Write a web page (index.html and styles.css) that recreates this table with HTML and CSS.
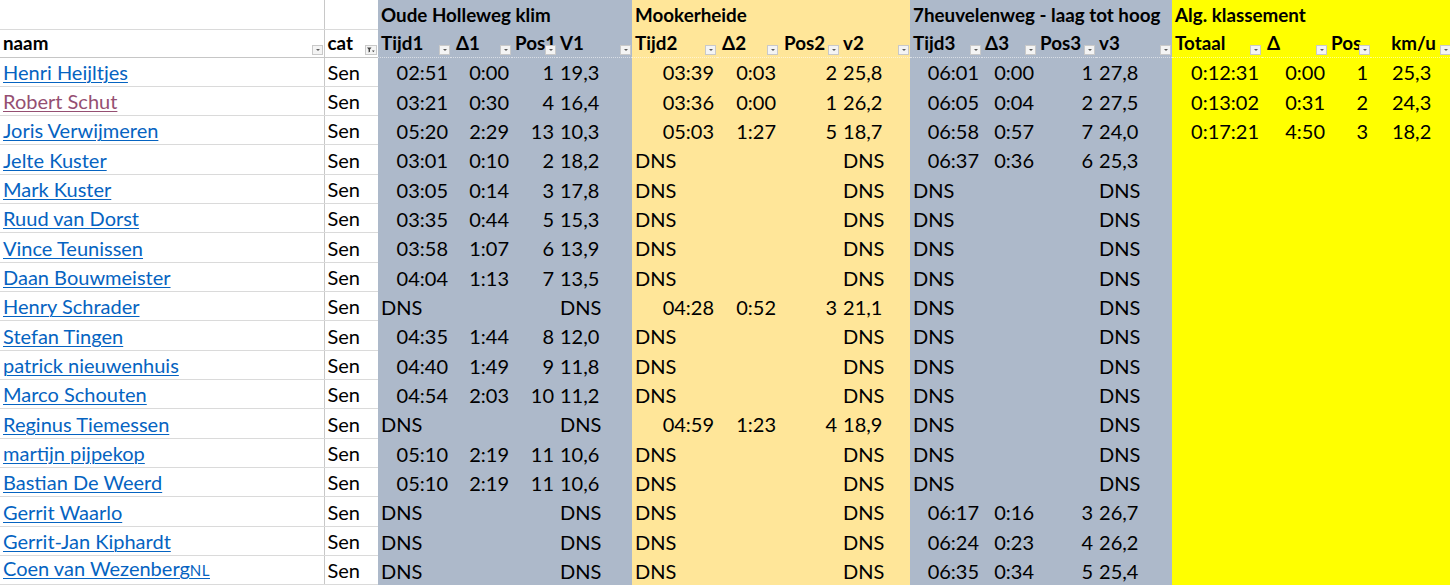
FILE: index.html
```html
<!DOCTYPE html>
<html lang="nl">
<head>
<meta charset="utf-8">
<title>Klassement</title>
<link rel="stylesheet" href="styles.css">
</head>
<body>
<table class="sheet">
  <colgroup>
    <col class="w-naam"><col class="w-cat">
    <col class="g w-t1"><col class="g w-d1"><col class="g w-p1"><col class="g w-v1">
    <col class="o w-t2"><col class="o w-d2"><col class="o w-p2"><col class="o w-v2">
    <col class="g w-t3"><col class="g w-d3"><col class="g w-p3"><col class="g w-v3">
    <col class="y w-t4"><col class="y w-d4"><col class="y w-p4"><col class="y w-v4">
  </colgroup>
  <thead>
    <tr class="h1">
      <th class="nm"></th><th class="ct"></th>
      <th colspan="4">Oude Holleweg klim</th>
      <th colspan="4">Mookerheide</th>
      <th colspan="4">7heuvelenweg - laag tot hoog</th>
      <th colspan="4">Alg. klassement</th>
    </tr>
    <tr class="h2">
      <th class="nm">naam<span class="fb"></span></th>
      <th class="ct">cat<span class="fb fb-on"><svg viewBox="0 0 9 8" width="9" height="8"><path d="M1 1.5h4.5L4 3.6v2.2L2.6 6.4V3.6z" fill="#444"/><path d="M6 4.5h2.6L7.3 6.3z" fill="#444"/></svg></span></th>
      <th>Tijd1<span class="fb"></span></th><th class="hd">Δ1<span class="fb"></span></th><th>Pos1<span class="fb"></span></th><th>V1<span class="fb"></span></th>
      <th>Tijd2<span class="fb"></span></th><th class="hd">Δ2<span class="fb"></span></th><th class="hp">Pos2<span class="fb"></span></th><th>v2<span class="fb"></span></th>
      <th>Tijd3<span class="fb"></span></th><th>Δ3<span class="fb"></span></th><th>Pos3<span class="fb"></span></th><th>v3<span class="fb"></span></th>
      <th>Totaal<span class="fb"></span></th><th class="hd">Δ<span class="fb"></span></th><th>Pos<span class="fb"></span></th><th class="c">km/u<span class="fb"></span></th>
    </tr>
  </thead>
  <tbody>
    <tr><td class="nm"><a href="#">Henri Heijltjes</a></td><td class="ct">Sen</td>
      <td class="r">02:51</td><td class="r">0:00</td><td class="r">1</td><td>19,3</td>
      <td class="r">03:39</td><td class="r">0:03</td><td class="r">2</td><td>25,8</td>
      <td class="r">06:01</td><td class="r">0:00</td><td class="r">1</td><td>27,8</td>
      <td class="r">0:12:31</td><td class="r">0:00</td><td class="r">1</td><td class="c">25,3</td></tr>
    <tr><td class="nm"><a href="#" class="visited">Robert Schut</a></td><td class="ct">Sen</td>
      <td class="r">03:21</td><td class="r">0:30</td><td class="r">4</td><td>16,4</td>
      <td class="r">03:36</td><td class="r">0:00</td><td class="r">1</td><td>26,2</td>
      <td class="r">06:05</td><td class="r">0:04</td><td class="r">2</td><td>27,5</td>
      <td class="r">0:13:02</td><td class="r">0:31</td><td class="r">2</td><td class="c">24,3</td></tr>
    <tr><td class="nm"><a href="#">Joris Verwijmeren</a></td><td class="ct">Sen</td>
      <td class="r">05:20</td><td class="r">2:29</td><td class="r">13</td><td>10,3</td>
      <td class="r">05:03</td><td class="r">1:27</td><td class="r">5</td><td>18,7</td>
      <td class="r">06:58</td><td class="r">0:57</td><td class="r">7</td><td>24,0</td>
      <td class="r">0:17:21</td><td class="r">4:50</td><td class="r">3</td><td class="c">18,2</td></tr>
    <tr><td class="nm"><a href="#">Jelte Kuster</a></td><td class="ct">Sen</td>
      <td class="r">03:01</td><td class="r">0:10</td><td class="r">2</td><td>18,2</td>
      <td>DNS</td><td></td><td></td><td>DNS</td>
      <td class="r">06:37</td><td class="r">0:36</td><td class="r">6</td><td>25,3</td>
      <td></td><td></td><td></td><td></td></tr>
    <tr><td class="nm"><a href="#">Mark Kuster</a></td><td class="ct">Sen</td>
      <td class="r">03:05</td><td class="r">0:14</td><td class="r">3</td><td>17,8</td>
      <td>DNS</td><td></td><td></td><td>DNS</td>
      <td>DNS</td><td></td><td></td><td>DNS</td>
      <td></td><td></td><td></td><td></td></tr>
    <tr><td class="nm"><a href="#">Ruud van Dorst</a></td><td class="ct">Sen</td>
      <td class="r">03:35</td><td class="r">0:44</td><td class="r">5</td><td>15,3</td>
      <td>DNS</td><td></td><td></td><td>DNS</td>
      <td>DNS</td><td></td><td></td><td>DNS</td>
      <td></td><td></td><td></td><td></td></tr>
    <tr><td class="nm"><a href="#">Vince Teunissen</a></td><td class="ct">Sen</td>
      <td class="r">03:58</td><td class="r">1:07</td><td class="r">6</td><td>13,9</td>
      <td>DNS</td><td></td><td></td><td>DNS</td>
      <td>DNS</td><td></td><td></td><td>DNS</td>
      <td></td><td></td><td></td><td></td></tr>
    <tr><td class="nm"><a href="#">Daan Bouwmeister</a></td><td class="ct">Sen</td>
      <td class="r">04:04</td><td class="r">1:13</td><td class="r">7</td><td>13,5</td>
      <td>DNS</td><td></td><td></td><td>DNS</td>
      <td>DNS</td><td></td><td></td><td>DNS</td>
      <td></td><td></td><td></td><td></td></tr>
    <tr><td class="nm"><a href="#">Henry Schrader</a></td><td class="ct">Sen</td>
      <td>DNS</td><td></td><td></td><td>DNS</td>
      <td class="r">04:28</td><td class="r">0:52</td><td class="r">3</td><td>21,1</td>
      <td>DNS</td><td></td><td></td><td>DNS</td>
      <td></td><td></td><td></td><td></td></tr>
    <tr><td class="nm"><a href="#">Stefan Tingen</a></td><td class="ct">Sen</td>
      <td class="r">04:35</td><td class="r">1:44</td><td class="r">8</td><td>12,0</td>
      <td>DNS</td><td></td><td></td><td>DNS</td>
      <td>DNS</td><td></td><td></td><td>DNS</td>
      <td></td><td></td><td></td><td></td></tr>
    <tr><td class="nm"><a href="#">patrick nieuwenhuis</a></td><td class="ct">Sen</td>
      <td class="r">04:40</td><td class="r">1:49</td><td class="r">9</td><td>11,8</td>
      <td>DNS</td><td></td><td></td><td>DNS</td>
      <td>DNS</td><td></td><td></td><td>DNS</td>
      <td></td><td></td><td></td><td></td></tr>
    <tr><td class="nm"><a href="#">Marco Schouten</a></td><td class="ct">Sen</td>
      <td class="r">04:54</td><td class="r">2:03</td><td class="r">10</td><td>11,2</td>
      <td>DNS</td><td></td><td></td><td>DNS</td>
      <td>DNS</td><td></td><td></td><td>DNS</td>
      <td></td><td></td><td></td><td></td></tr>
    <tr><td class="nm"><a href="#">Reginus Tiemessen</a></td><td class="ct">Sen</td>
      <td>DNS</td><td></td><td></td><td>DNS</td>
      <td class="r">04:59</td><td class="r">1:23</td><td class="r">4</td><td>18,9</td>
      <td>DNS</td><td></td><td></td><td>DNS</td>
      <td></td><td></td><td></td><td></td></tr>
    <tr><td class="nm"><a href="#">martijn pijpekop</a></td><td class="ct">Sen</td>
      <td class="r">05:10</td><td class="r">2:19</td><td class="r">11</td><td>10,6</td>
      <td>DNS</td><td></td><td></td><td>DNS</td>
      <td>DNS</td><td></td><td></td><td>DNS</td>
      <td></td><td></td><td></td><td></td></tr>
    <tr><td class="nm"><a href="#">Bastian De Weerd</a></td><td class="ct">Sen</td>
      <td class="r">05:10</td><td class="r">2:19</td><td class="r">11</td><td>10,6</td>
      <td>DNS</td><td></td><td></td><td>DNS</td>
      <td>DNS</td><td></td><td></td><td>DNS</td>
      <td></td><td></td><td></td><td></td></tr>
    <tr><td class="nm"><a href="#">Gerrit Waarlo</a></td><td class="ct">Sen</td>
      <td>DNS</td><td></td><td></td><td>DNS</td>
      <td>DNS</td><td></td><td></td><td>DNS</td>
      <td class="r">06:17</td><td class="r">0:16</td><td class="r">3</td><td>26,7</td>
      <td></td><td></td><td></td><td></td></tr>
    <tr><td class="nm"><a href="#">Gerrit-Jan Kiphardt</a></td><td class="ct">Sen</td>
      <td>DNS</td><td></td><td></td><td>DNS</td>
      <td>DNS</td><td></td><td></td><td>DNS</td>
      <td class="r">06:24</td><td class="r">0:23</td><td class="r">4</td><td>26,2</td>
      <td></td><td></td><td></td><td></td></tr>
    <tr><td class="nm"><a href="#">Coen van Wezenberg<span class="sc">NL</span></a></td><td class="ct">Sen</td>
      <td>DNS</td><td></td><td></td><td>DNS</td>
      <td>DNS</td><td></td><td></td><td>DNS</td>
      <td class="r">06:35</td><td class="r">0:34</td><td class="r">5</td><td>25,4</td>
      <td></td><td></td><td></td><td></td></tr>
  </tbody>
</table>
</body>
</html>
```

FILE: styles.css
```css
html, body {
  margin: 0;
  padding: 0;
  background: #ffffff;
}
body {
  width: 1450px;
  height: 587px;
  overflow: hidden;
  font-family: Lato, "Open Sans", sans-serif;
  color: #000000;
}

.sheet {
  border-collapse: collapse;
  table-layout: fixed;
  width: 1452px;
}

/* column widths */
.w-naam { width: 324px; }
.w-cat  { width: 54px; }
.w-t1 { width: 73px; } .w-d1 { width: 61px; } .w-p1 { width: 45px; } .w-v1 { width: 75px; }
.w-t2 { width: 85px; } .w-d2 { width: 62px; } .w-p2 { width: 61px; } .w-v2 { width: 70px; }
.w-t3 { width: 72px; } .w-d3 { width: 55px; } .w-p3 { width: 59px; } .w-v3 { width: 76px; }
.w-t4 { width: 90px; } .w-d4 { width: 66px; } .w-p4 { width: 43px; } .w-v4 { width: 81px; }

/* fills */
col.g { background: #adb9ca; }
col.o { background: #ffe699; }
col.y { background: #ffff00; }

th, td {
  padding: 0 3px;
  white-space: nowrap;
  overflow: visible;
  text-align: left;
  vertical-align: bottom;
}

th {
  font-weight: 700;
  font-size: 18.8px;
  line-height: 22px;
  position: relative;
}
.h1 th { height: 29px; padding-bottom: 3px; box-sizing: border-box; }
.h2 th {
  height: 28px;
  padding-bottom: 3px;
  box-sizing: border-box;
  border-bottom: 1px dotted rgba(255, 255, 255, 0.55);
}
.h2 th.nm, .h2 th.ct { border-bottom: 1px solid #c6c6c6; }
.h2 th.hd { padding-left: 5px; }
.h2 th.hp { padding-left: 5px; }
.h2 th.c { text-align: center; padding-left: 7px; padding-right: 3px; }

td {
  font-size: 20px;
  line-height: 22px;
  height: 29.33px;
  padding-bottom: 3px;
  box-sizing: border-box;
}
td.r { text-align: right; }
td.c { text-align: center; }

.nm, .ct { background: #ffffff; }
.h1 .nm, .h1 .ct { border-bottom: 1px solid #dadada; }
td.nm, td.ct { border-bottom: 1px solid #dadada; }
.nm { border-right: 1px solid #c8c8c8; }

td.nm a {
  color: #0563c1;
  text-decoration: underline;
  text-decoration-thickness: 1px;
  text-underline-offset: 2px;
}
td.nm a.visited { color: #954f72; }
.sc { font-size: 0.75em; letter-spacing: 0.5px; }

/* filter buttons */
.fb {
  position: absolute;
  right: 1px;
  bottom: 2px;
  width: 11px;
  height: 10px;
  box-sizing: border-box;
  background: #f4f4f4;
  border: 1px solid #c9c9c9;
}
.fb::after {
  content: "";
  position: absolute;
  left: 3px;
  top: 3px;
  border-left: 2px solid transparent;
  border-right: 2px solid transparent;
  border-top: 2px solid #5a5a5a;
}
.fb-on { width: 12px; }
.fb-on::after { display: none; }
.fb-on svg { position: absolute; left: 0; top: 0; }
```
